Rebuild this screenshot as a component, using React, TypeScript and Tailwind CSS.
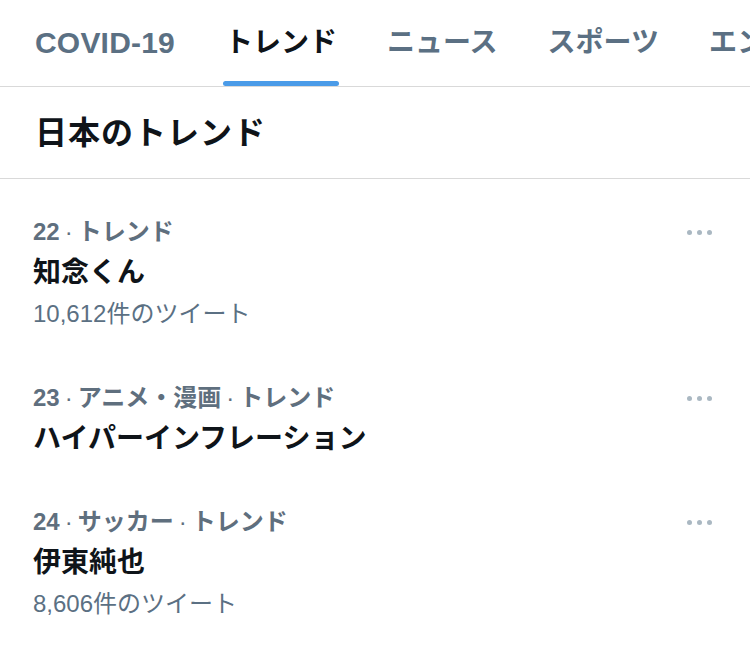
import React from 'react';

const FONT = '"Liberation Sans", "Noto Sans CJK JP", sans-serif';

interface Trend {
    rank: number;
    category: string[];
    name: string;
    tweets?: string;
}

const TRENDS: Trend[] = [
    { rank: 22, category: ['トレンド'], name: '知念くん', tweets: '10,612件のツイート' },
    { rank: 23, category: ['アニメ・漫画', 'トレンド'], name: 'ハイパーインフレーション' },
    { rank: 24, category: ['サッカー', 'トレンド'], name: '伊東純也', tweets: '8,606件のツイート' },
];

const TABS = ['COVID-19', 'トレンド', 'ニュース', 'スポーツ', 'エンタメ'];

const MoreDots = () => (
    <div className="flex items-center gap-[5px] pt-[2px]">
        <span className="w-[5px] h-[5px] rounded-full bg-[#aab8c2]" />
        <span className="w-[5px] h-[5px] rounded-full bg-[#aab8c2]" />
        <span className="w-[5px] h-[5px] rounded-full bg-[#aab8c2]" />
    </div>
);

const TrendRow = ({ trend }: { trend: Trend }) => (
    <div className="flex justify-between items-start pl-[33px] pr-[38px] py-[21px]">
        <div className="flex flex-col">
            <div className="text-[24px] leading-[41px] font-semibold text-[#5f6f7e] whitespace-nowrap">
                {trend.rank}
                {trend.category.map((c) => (
                    <span key={c}>
                        <span className="mx-[5px] font-normal">·</span>
                        {c}
                    </span>
                ))}
            </div>
            <div className="text-[28px] leading-[41px] font-bold text-[#0f1419] whitespace-nowrap">{trend.name}</div>
            {trend.tweets && (
                <div className="text-[24px] leading-[42px] text-[#5b7083] whitespace-nowrap">{trend.tweets}</div>
            )}
        </div>
        <div className="h-[41px] flex items-center">
            <MoreDots />
        </div>
    </div>
);

export default function App() {
    return (
        <div className="w-[750px] h-[659px] bg-white overflow-hidden" style={{ fontFamily: FONT }}>
            {/* Tabs */}
            <div className="flex border-b border-[#d9d9d9] h-[87px] pl-[35px] gap-[50px] overflow-hidden whitespace-nowrap">
                {TABS.map((t) => {
                    const active = t === 'トレンド';
                    const latin = t === 'COVID-19';
                    return (
                        <div key={t} className="relative flex items-start pt-[24px]">
                            <span
                                className={`leading-[38px] font-bold ${latin ? 'text-[30px] tracking-[0.2px]' : 'text-[28px]'} ${active ? 'text-[#0f1419]' : 'text-[#5b7083]'}`}
                            >
                                {t}
                            </span>
                            {active && (
                                <div className="absolute left-[-2px] right-[-2px] bottom-[0px] h-[5px] rounded-full bg-[#4a9be8]" />
                            )}
                        </div>
                    );
                })}
            </div>

            {/* Header */}
            <div className="h-[92px] border-b border-[#d9d9d9] flex items-center pl-[35px]">
                <h1 className="text-[32px] font-bold text-[#0f1419] tracking-[1px]">日本のトレンド</h1>
            </div>

            {/* Trend list */}
            <div className="pt-[11px]">
                {TRENDS.map((t) => (
                    <TrendRow key={t.rank} trend={t} />
                ))}
            </div>
        </div>
    );
}
